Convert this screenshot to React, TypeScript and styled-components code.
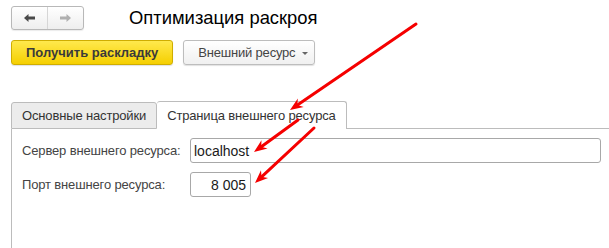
import React from "react";
import styled, { createGlobalStyle } from "styled-components";

const Global = createGlobalStyle`
  html, body {
    margin: 0;
    padding: 0;
    background: #fff;
    font-family: "Liberation Sans", Arial, sans-serif;
    color: #333;
  }
`;

const Page = styled.div`
  position: relative;
  width: 609px;
  height: 248px;
  overflow: hidden;
  padding: 6px 0 0 11px;
  box-sizing: border-box;
`;

const Header = styled.div`
  display: flex;
  align-items: center;
  height: 24px;
`;

const NavGroup = styled.div`
  display: flex;
  width: 73px;
  height: 24px;
  box-sizing: border-box;
  border: 1px solid #b8b8b8;
  border-radius: 3px;
  background: linear-gradient(#ffffff, #eeeeee);
  box-shadow: 0 1px 1px rgba(0, 0, 0, 0.08);
`;

const NavButton = styled.div<{ $divider?: boolean }>`
  flex: 1;
  display: flex;
  align-items: center;
  justify-content: center;
  border-left: ${(p) => (p.$divider ? "1px solid #d6d6d6" : "none")};
`;

const Title = styled.h1`
  margin: 0 0 0 45px;
  font-size: 18.4px;
  font-weight: normal;
  color: #000;
  line-height: 24px;
`;

const Toolbar = styled.div`
  display: flex;
  gap: 10px;
  margin-top: 10px;
  height: 25px;
`;

const Button = styled.div<{ $primary?: boolean }>`
  display: flex;
  align-items: center;
  gap: 7px;
  box-sizing: border-box;
  height: 25px;
  padding: 0 ${(p) => (p.$primary ? "14px" : "6px")} 0 14px;
  border: 1px solid ${(p) => (p.$primary ? "#cfad00" : "#bdbdbd")};
  border-radius: 3px;
  background: ${(p) =>
    p.$primary
      ? "linear-gradient(#ffe94d, #f5cf00)"
      : "linear-gradient(#ffffff, #f0f0f0)"};
  box-shadow: 0 1px 1px rgba(0, 0, 0, 0.12);
  font-size: 13px;
  letter-spacing: ${(p) => (p.$primary ? "0" : "-0.2px")};
  font-weight: ${(p) => (p.$primary ? "bold" : "normal")};
  color: ${(p) => (p.$primary ? "#3a3a3a" : "#444")};
  white-space: nowrap;
`;

const Caret = styled.span`
  width: 0;
  height: 0;
  border-left: 3px solid transparent;
  border-right: 3px solid transparent;
  border-top: 3px solid #666;
  margin-top: 1px;
`;

const Tabs = styled.div`
  display: flex;
  align-items: flex-end;
  margin-top: 36px;
  height: 28px;
`;

const Tab = styled.div<{ $active?: boolean }>`
  box-sizing: border-box;
  height: ${(p) => (p.$active ? "28px" : "27px")};
  padding: 0 10px;
  display: flex;
  align-items: center;
  font-size: 13px;
  letter-spacing: -0.15px;
  color: #333;
  border: 1px solid #bcbcbc;
  border-bottom: ${(p) => (p.$active ? "none" : "1px solid #bcbcbc")};
  border-left: ${(p) => (p.$active ? "none" : "1px solid #bcbcbc")};
  border-radius: 3px 3px 0 0;
  background: ${(p) => (p.$active ? "#fff" : "#ececec")};
  white-space: nowrap;
`;

const TabLine = styled.div`
  flex: 1;
  border-bottom: 1px solid #bcbcbc;
`;

const Panel = styled.div`
  border-left: 1px solid #bcbcbc;
  height: 130px;
  padding: 9px 8px 0 10px;
  display: flex;
  flex-direction: column;
  gap: 9px;
`;

const Row = styled.div`
  display: flex;
  align-items: center;
`;

const Label = styled.div`
  width: 168px;
  font-size: 13px;
  letter-spacing: -0.15px;
  color: #444;
  white-space: nowrap;
`;

const Input = styled.div<{ $width?: number; $right?: boolean }>`
  box-sizing: border-box;
  height: 25px;
  ${(p) => (p.$width ? `width: ${p.$width}px;` : "flex: 1;")}
  border: 1px solid #a8a8a8;
  border-radius: 3px;
  display: flex;
  align-items: center;
  justify-content: ${(p) => (p.$right ? "flex-end" : "flex-start")};
  padding: 0 4px 0 3px;
  font-size: 14px;
  color: #1a1a1a;
`;

const Overlay = styled.svg`
  position: absolute;
  left: 0;
  top: 0;
  pointer-events: none;
`;

const Arrow = ({ x1, y1, x2, y2 }: { x1: number; y1: number; x2: number; y2: number }) => {
  const a = Math.atan2(y2 - y1, x2 - x1);
  const len = 14;
  const spread = 0.38;
  const p1 = [x2 - len * Math.cos(a - spread), y2 - len * Math.sin(a - spread)];
  const p2 = [x2 - len * Math.cos(a + spread), y2 - len * Math.sin(a + spread)];
  const back = [x2 - 9 * Math.cos(a), y2 - 9 * Math.sin(a)];
  return (
    <g>
      <line x1={x1} y1={y1} x2={back[0]} y2={back[1]} stroke="#f50000" strokeWidth={3} strokeLinecap="round" />
      <polygon
        points={`${x2},${y2} ${p1[0]},${p1[1]} ${back[0]},${back[1]} ${p2[0]},${p2[1]}`}
        fill="#f50000"
      />
    </g>
  );
};

export default function App() {
  return (
    <>
      <Global />
      <Page>
        <Header>
          <NavGroup>
            <NavButton>
              <svg width="11" height="8" viewBox="0 0 11 8">
                <path d="M0 4 L4.5 0 V2.6 H11 V5.4 H4.5 V8 Z" fill="#4a4a4a" />
              </svg>
            </NavButton>
            <NavButton $divider>
              <svg width="11" height="8" viewBox="0 0 11 8">
                <path d="M11 4 L6.5 0 V2.6 H0 V5.4 H6.5 V8 Z" fill="#b0b0b0" />
              </svg>
            </NavButton>
          </NavGroup>
          <Title>Оптимизация раскроя</Title>
        </Header>
        <Toolbar>
          <Button $primary>Получить раскладку</Button>
          <Button>
            Внешний ресурс
            <Caret />
          </Button>
        </Toolbar>
        <Tabs>
          <Tab>Основные настройки</Tab>
          <Tab $active>Страница внешнего ресурса</Tab>
          <TabLine />
        </Tabs>
        <Panel>
          <Row>
            <Label>Сервер внешнего ресурса:</Label>
            <Input>localhost</Input>
          </Row>
          <Row>
            <Label>Порт внешнего ресурса:</Label>
            <Input $width={61} $right>
              8 005
            </Input>
          </Row>
        </Panel>
        <Overlay width="609" height="248">
          <Arrow x1={416} y1={24} x2={290} y2={110} />
          <Arrow x1={298} y1={120} x2={254} y2={152} />
          <Arrow x1={314} y1={128} x2={255} y2={183} />
        </Overlay>
      </Page>
    </>
  );
}
